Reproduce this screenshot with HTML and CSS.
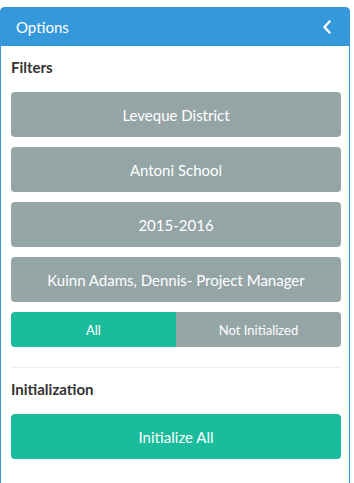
FILE: index.html
```html
<!DOCTYPE html>
<html lang="en">
<head>
    <meta charset="UTF-8">
    <meta name="viewport" content="width=device-width, initial-scale=1.0">
    <title>Options</title>
    <link rel="stylesheet" href="styles.css">
</head>
<body>
    <div class="panel">
        <div class="panel-header">
            <span class="panel-title">Options</span>
            <button class="collapse" aria-label="Collapse">
                <svg width="10" height="14" viewBox="0 0 10 14"><polyline points="7.5,1.5 2.5,7 7.5,12.5" fill="none" stroke="#fff" stroke-width="2.4" stroke-linecap="round" stroke-linejoin="round"/></svg>
            </button>
        </div>
        <div class="panel-body">
            <h4 class="section-title">Filters</h4>
            <div class="filters">
                <button class="btn btn-gray">Leveque District</button>
                <button class="btn btn-gray">Antoni School</button>
                <button class="btn btn-gray">2015-2016</button>
                <button class="btn btn-gray">Kuinn Adams, Dennis- Project Manager</button>
            </div>
            <div class="toggle">
                <button class="toggle-item active">All</button>
                <button class="toggle-item">Not Initialized</button>
            </div>
            <hr class="divider">
            <h4 class="section-title">Initialization</h4>
            <button class="btn btn-green">Initialize All</button>
        </div>
    </div>
</body>
</html>
```

FILE: styles.css
```css
body {
    margin: 0;
    padding-top: 7px;
    font-family: Lato, "Open Sans", sans-serif;
    color: #34495e;
    background: #fff;
}
.panel {
    width: 350px;
    box-sizing: border-box;
    border: 1px solid #3498db;
    border-top: none;
    border-radius: 5px 5px 0 0;
    height: 490px;
}
.panel-header {
    display: flex;
    align-items: center;
    justify-content: space-between;
    height: 39px;
    padding: 0 18px 0 16px;
    margin: 0 -1px;
    background: #3498db;
    border-radius: 5px 5px 0 0;
    color: #fff;
}
.panel-title {
    font-size: 15px;
}
.collapse {
    border: none;
    background: none;
    padding: 0;
    display: flex;
    cursor: pointer;
}
.panel-body {
    padding: 0 8px 0 10px;
}
.section-title {
    margin: 0;
    font-size: 15px;
    font-weight: bold;
    line-height: 20px;
    color: #333;
}
.panel-body > .section-title:first-child {
    padding-top: 11px;
}
.filters {
    display: flex;
    flex-direction: column;
    gap: 10px;
    margin-top: 15px;
}
.btn {
    display: block;
    width: 100%;
    height: 45px;
    border: none;
    border-radius: 4px;
    font-family: inherit;
    font-size: 15px;
    color: #fff;
    cursor: pointer;
}
.btn-gray {
    background: #95a5a6;
}
.btn-green {
    background: #1abc9c;
    margin-top: 15px;
}
.toggle {
    display: flex;
    margin-top: 10px;
    height: 35px;
    border-radius: 4px;
    overflow: hidden;
}
.toggle-item {
    flex: 1;
    border: none;
    background: #95a5a6;
    color: #fff;
    font-family: inherit;
    font-size: 13px;
    cursor: pointer;
}
.toggle-item.active {
    background: #1abc9c;
}
.divider {
    border: none;
    border-top: 1px solid #eee;
    margin: 20px 0 11px;
}
```
